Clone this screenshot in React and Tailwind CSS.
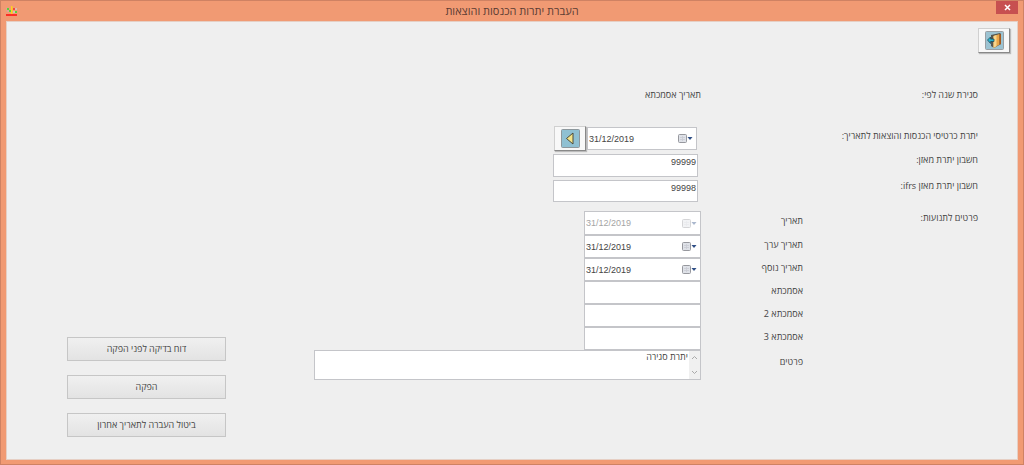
import React from "react";

function CalendarIcon() {
  return (
    <svg viewBox="0 0 15 9" className="h-[9px] w-[15px] shrink-0" aria-hidden="true">
      <rect x="0.5" y="0.5" width="8" height="8" rx="1" fill="#dfe2e8" stroke="#97989e" />
      <path d="M2 3.5h5M2 5.5h5M4.500 2v5" stroke="#c9ccd3" strokeWidth="0.8" />
      <path d="M9.500 3h5L12 6z" fill="#2f4f86" />
    </svg>
  );
}

function DateField({ id, disabled = false, className = "" }) {
  return (
    <div dir="ltr" className={`flex items-center border border-[#c4c5c9] bg-white pr-[3px] ${className}`}>
      <input
        id={id}
        type="text"
        defaultValue="31/12/2019"
        disabled={disabled}
        className="h-full min-w-0 flex-1 bg-transparent pl-px font-['Liberation_Sans',sans-serif] text-[9px] text-[#444] outline-none disabled:text-[#a5a5a5]"
      />
      <button type="button" aria-label="לוח שנה" disabled={disabled} className="disabled:opacity-40">
        <CalendarIcon />
      </button>
    </div>
  );
}

function IconButton({ label, children }) {
  return (
    <button
      type="button"
      aria-label={label}
      className="flex h-[25px] w-8 items-center justify-center border border-t-[#d0d0d0] border-r-[#888] border-b-[#888] border-l-[#d0d0d0] bg-[#f8f8f8] shadow-[1px_1px_1px_#bbb]"
    >
      {children}
    </button>
  );
}

function DoorIcon() {
  return (
    <svg viewBox="0 0 19 19" className="size-[19px]" aria-hidden="true">
      <rect x="0.5" y="0.5" width="18" height="18" rx="1" fill="#9cc3d2" stroke="#9a9fa3" />
      <path d="M6 4l9-2 1 1v10l-7 4-3-2z" fill="#56564e" />
      <path d="M8.500 5l6-2v10.500l-6 3.500z" fill="#e9a548" />
      <path d="M8.500 5l3-1v11.300l-3 1.700z" fill="#f8d58c" />
      <path d="M14.500 3l1.500.5v9.500l-1.500.8z" fill="#a8591c" />
      <path d="M2.500 9l3-3v2H9v2.500H5.500v2z" fill="#28b4cf" stroke="#1b3f4c" strokeWidth="0.7" />
    </svg>
  );
}

function PlayIcon() {
  return (
    <svg viewBox="0 0 19 19" className="size-[19px]" aria-hidden="true">
      <rect x="0.5" y="0.5" width="18" height="18" rx="1" fill="#8fc0d2" stroke="#8d979c" />
      <path d="M12 4v11L5.500 9.500z" fill="#f3e58b" stroke="#4c4a38" strokeLinejoin="round" />
    </svg>
  );
}

function AppIcon() {
  return (
    <svg viewBox="0 0 12 10" className="h-[10px] w-3" aria-hidden="true">
      <path d="M0 1.500l2 .5 2.500 4H1z" fill="#d9a79a" />
      <path d="M1 2h2v2H1zM3 4h2v2H3zM9 5h2v2H9z" fill="#58d03c" />
      <path d="M7 2h2v2H7z" fill="#f2483b" />
      <path d="M9 2h2v2H9zM7 5h2v2H7z" fill="#d8bbb5" />
      <path d="M5 0h1.500v8H5z" fill="#ffd21f" />
      <path d="M0 8h11v2H0z" fill="#fb2f26" />
    </svg>
  );
}

const entries = [
  { id: "date", label: "תאריך", date: true, disabled: true },
  { id: "value-date", label: "תאריך ערך", date: true },
  { id: "extra-date", label: "תאריך נוסף", date: true },
  { id: "ref-1", label: "אסמכתא" },
  { id: "ref-2", label: "אסמכתא 2" },
  { id: "ref-3", label: "אסמכתא 3" },
];

const actions = [
  "דוח בדיקה לפני הפקה",
  "הפקה",
  "ביטול העברה לתאריך אחרון",
];

export default function App() {
  return (
    <div
      dir="rtl"
      className="flex min-h-screen flex-col border border-[#cf8263] bg-[#f19a73] px-[5px] pb-1 font-['Open_Sans',sans-serif] text-[9px] leading-3 text-[#444]"
    >
      <header className="grid h-5 shrink-0 grid-cols-[1fr_auto_1fr] items-center">
        <button type="button" aria-label="סגירה" className="flex h-[13px] w-[22px] items-center justify-center self-start bg-[#c75050]">
          <svg viewBox="0 0 7 7" className="size-[7px]" aria-hidden="true">
            <path d="M1 1l5 5M6 1L1 6" stroke="#fff" strokeWidth="1.500" />
          </svg>
        </button>
        <h1 className="text-[11px] leading-4 text-[#5b3d33]">העברת יתרות הכנסות והוצאות</h1>
        <span className="justify-self-end"><AppIcon /></span>
      </header>

      <main className="flex flex-1 flex-col border border-[#e6cfc4] bg-[#efefef] pb-[22px]">
        <div className="flex px-[7px] pt-[6px]">
          <IconButton label="יציאה"><DoorIcon /></IconButton>
        </div>

        <form className="flex flex-1 justify-between pt-9 pr-[39px] pl-[60px]" onSubmit={(e) => e.preventDefault()}>
          <div className="w-[664px]">
            <div className="grid grid-cols-[277px_1fr]">
              <span>סגירת שנה לפי:</span>
              <span>תאריך אסמכתא</span>
            </div>

            <div className="mt-[25px] grid grid-cols-[277px_1fr] gap-y-[3px]">
              <label htmlFor="balance-date" className="pt-1">יתרת כרטיסי הכנסות והוצאות לתאריך:</label>
              <div className="flex items-center gap-px ps-1">
                <DateField id="balance-date" className="h-[23px] w-[110px]" />
                <IconButton label="הצג"><PlayIcon /></IconButton>
              </div>
              <label htmlFor="account">חשבון יתרת מאזן:</label>
              <div className="ps-[3px]">
                <input id="account" defaultValue="99999" className="block h-[23px] w-[145px] border border-[#c4c5c9] bg-white px-px pb-[7px] font-['Liberation_Sans',sans-serif]" />
              </div>
              <label htmlFor="account-ifrs">חשבון יתרת מאזן ifrs:</label>
              <div className="ps-[3px]">
                <input id="account-ifrs" defaultValue="99998" className="block h-[22px] w-[145px] border border-[#c4c5c9] bg-white px-px pb-[7px] font-['Liberation_Sans',sans-serif]" />
              </div>
            </div>

            <section className="mt-[9px] grid grid-cols-[175px_102px_1fr]">
              <h2 className="row-span-7 pt-px">פרטים לתנועות:</h2>
              {entries.map((e) => (
                <React.Fragment key={e.id}>
                  <label htmlFor={e.id} className="pt-1">{e.label}</label>
                  {e.date ? (
                    <DateField id={e.id} disabled={e.disabled} className={e.disabled ? "h-6 w-[117px]" : "h-[23px] w-[117px]"} />
                  ) : (
                    <input id={e.id} type="text" className="h-[23px] w-[117px] border border-[#c4c5c9] bg-white px-px" />
                  )}
                </React.Fragment>
              ))}
              <label htmlFor="details" className="pt-[6px]">פרטים</label>
              <div className="flex h-[30px] border border-[#c4c5c9] bg-white">
                <div className="flex w-[11px] flex-col items-center justify-between bg-[#f0f0f0] py-1">
                  <svg viewBox="0 0 7 5" className="h-[5px] w-[7px]" aria-hidden="true"><path d="M1 4l2.500-2.500L6 4" fill="none" stroke="#aaa" /></svg>
                  <svg viewBox="0 0 7 5" className="h-[5px] w-[7px]" aria-hidden="true"><path d="M1 1l2.500 2.500L6 1" fill="none" stroke="#aaa" /></svg>
                </div>
                <textarea id="details" defaultValue="יתרת סגירה" className="h-full min-w-0 flex-1 resize-none overflow-hidden bg-transparent px-px outline-none" />
              </div>
            </section>
          </div>

          <div className="flex w-[159px] flex-col gap-[14px] self-end">
            {actions.map((a) => (
              <button key={a} type="button" className="h-6 border border-[#c6c6c6] bg-linear-to-b from-[#f0f0f0] to-[#e3e3e3]">
                {a}
              </button>
            ))}
          </div>
        </form>
      </main>
    </div>
  );
}
